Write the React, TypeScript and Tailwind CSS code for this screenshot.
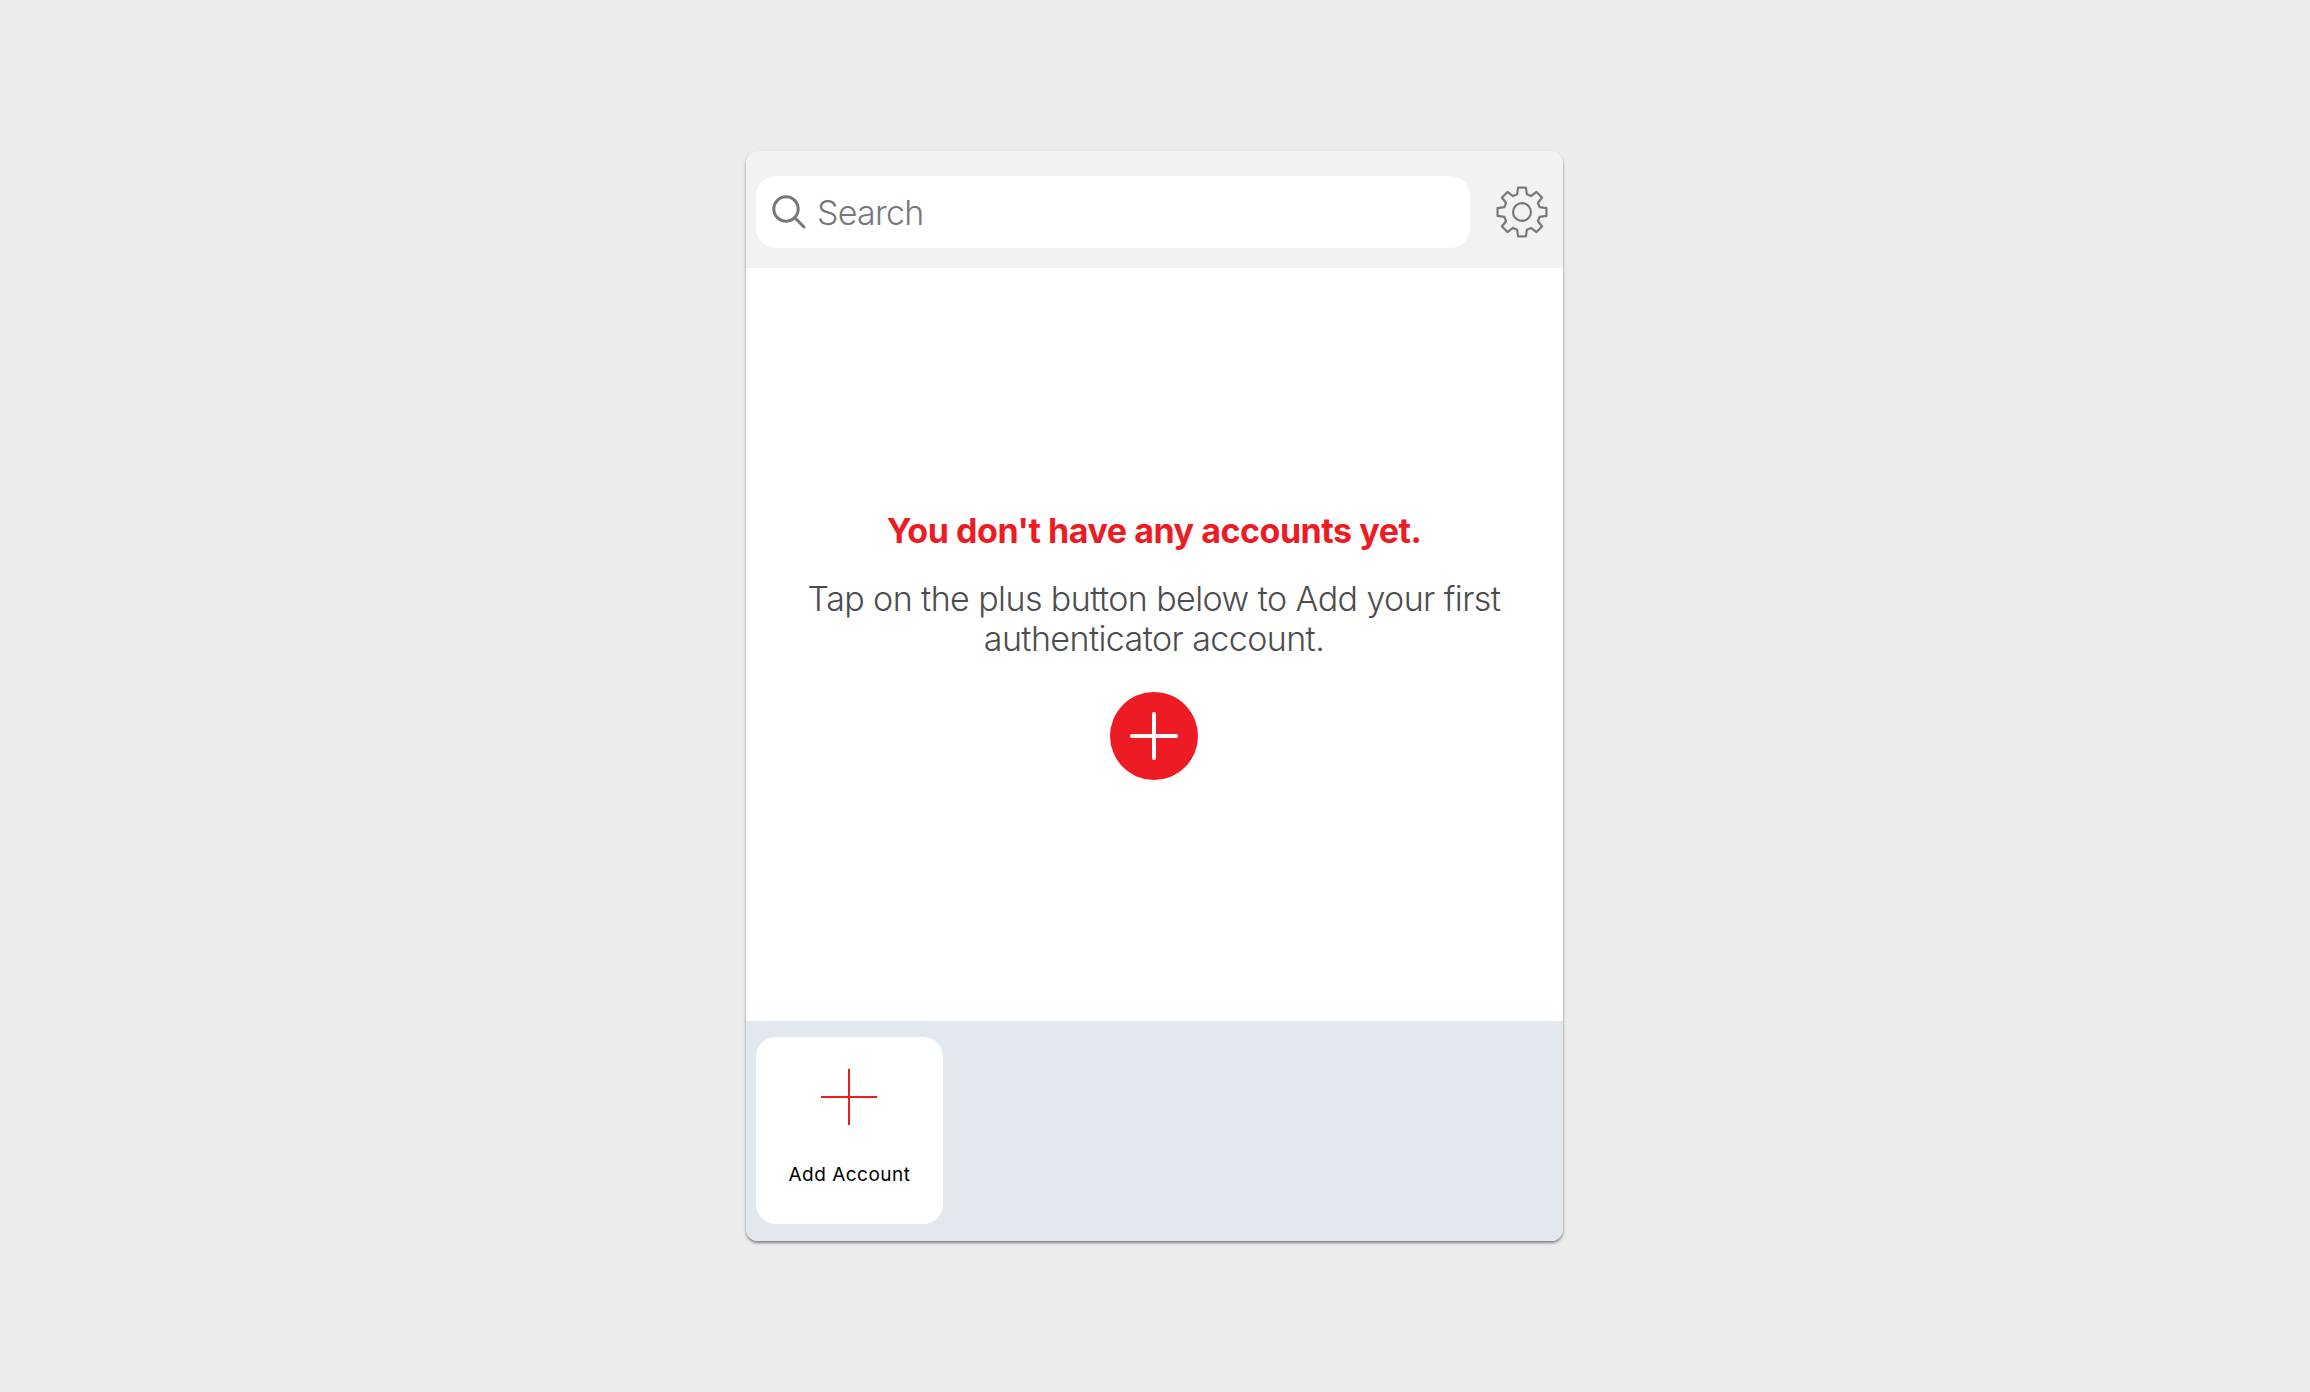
import React from 'react';

const gearPath = (() => {
  const cx = 25;
  const cy = 25;
  const pts: string[] = [];
  for (let i = 0; i < 8; i++) {
    const a = (i * Math.PI) / 4 - Math.PI / 2;
    const seq: Array<[number, number]> = [
      [17.6, -0.27],
      [23.8, -0.16],
      [23.8, 0.16],
      [17.6, 0.27],
    ];
    for (const [r, d] of seq) {
      pts.push(`${(cx + r * Math.cos(a + d)).toFixed(2)} ${(cy + r * Math.sin(a + d)).toFixed(2)}`);
    }
  }
  return `M${pts.join('L')}Z`;
})();

function GearIcon() {
  return (
    <svg width="52" height="52" viewBox="0 0 50 50" fill="none" stroke="#77787b" strokeWidth="2.1" strokeLinejoin="round">
      <path d={gearPath} />
      <circle cx="25" cy="25" r="8.6" />
    </svg>
  );
}

function SearchIcon() {
  return (
    <svg width="36" height="36" viewBox="0 0 36 36" fill="none" stroke="#77787b" strokeWidth="3" strokeLinecap="round">
      <circle cx="15" cy="15" r="12.2" />
      <path d="M24 24l9 9" />
    </svg>
  );
}

export default function App() {
  return (
    <div className="h-[1392px] w-[2310px] overflow-hidden bg-[#ececec] pt-[151px] font-['Inter',sans-serif]">
      <div className="ml-[746px] flex h-[1090px] w-[817px] flex-col overflow-hidden rounded-[12px] shadow-[0_2px_3px_rgba(0,0,0,0.45)]">
        <header className="flex h-[117px] shrink-0 items-center bg-[#f2f2f2] pl-[10px] pr-[15px] pt-[5px]">
          <div className="flex h-[72px] w-[714px] items-center gap-[10px] rounded-[20px] bg-white pl-[15px]">
            <SearchIcon />
            <span className="text-[34px] font-light tracking-[-0.7px] text-[#77787b]">Search</span>
          </div>
          <div className="ml-auto flex">
            <GearIcon />
          </div>
        </header>

        <main className="flex h-[753px] shrink-0 flex-col items-center bg-white pr-[1px] pt-[243px] text-center">
          <h1 className="text-[34px] leading-[40px] font-bold tracking-[-0.46px] text-[#ed1c24]">You don't have any accounts yet.</h1>
          <p className="mt-[28px] w-[720px] text-[34px] leading-[40px] font-light tracking-[-0.58px] text-[#4d4d4f]">
            Tap on the plus button below to Add your first authenticator account.
          </p>
          <button type="button" className="mt-[33px] flex h-[88px] w-[88px] items-center justify-center rounded-full bg-[#ed1c24]">
            <svg width="48" height="48" viewBox="0 0 48 48" stroke="#fff" strokeWidth="4" strokeLinecap="round">
              <path d="M24 2v44M2 24h44" />
            </svg>
          </button>
        </main>

        <footer className="flex-1 bg-[#e3e8ef] pl-[10px] pt-[16px]">
          <div className="flex h-[187px] w-[187px] flex-col items-center rounded-[20px] bg-white pt-[32px]">
            <svg width="56" height="56" viewBox="0 0 56 56" stroke="#ed1c24" strokeWidth="2" className="-translate-x-[1px]">
              <path d="M28 0v56M0 28h56" />
            </svg>
            <span className="mt-[38px] text-[19px] leading-[24px] tracking-[0.5px] text-black">Add Account</span>
          </div>
        </footer>
      </div>
    </div>
  );
}
